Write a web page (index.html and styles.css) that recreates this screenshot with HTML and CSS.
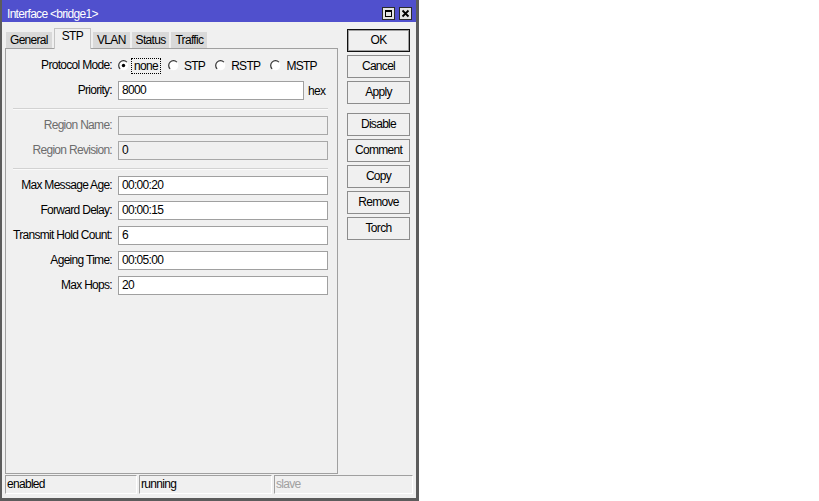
FILE: index.html
```html
<!DOCTYPE html>
<html>
<head>
<meta charset="utf-8">
<title>Interface &lt;bridge1&gt;</title>
<link rel="stylesheet" href="styles.css">
</head>
<body>
<div class="window">
  <div class="titlebar">
    <span class="title">Interface &lt;bridge1&gt;</span>
    <div class="title-btns">
      <span class="tbtn"><svg width="11" height="11" viewBox="0 0 11 11"><rect x="2.5" y="2.5" width="6" height="6" fill="none" stroke="#000" stroke-width="1"/><rect x="2" y="2" width="7" height="2" fill="#000"/></svg></span>
      <span class="tbtn"><svg width="11" height="11" viewBox="0 0 11 11"><path d="M2.5 2.5 L8.5 8.5 M8.5 2.5 L2.5 8.5" stroke="#000" stroke-width="1.8" fill="none"/></svg></span>
    </div>
  </div>
  <div class="body">
    <div class="left">
      <div class="tabs">
        <span class="tab">General</span>
        <span class="tab active">STP</span>
        <span class="tab">VLAN</span>
        <span class="tab">Status</span>
        <span class="tab">Traffic</span>
      </div>
      <div class="panel">
        <div class="form">
          <span class="lbl">Protocol Mode:</span>
          <div class="radios">
            <span class="opt"><svg class="radio" width="11" height="11" viewBox="0 0 11 11"><circle cx="5.5" cy="5.5" r="4.8" fill="#fff"/><path d="M8.9 2.1 A4.8 4.8 0 0 0 2.1 8.9" fill="none" stroke="#333" stroke-width="1.2"/><circle cx="5.5" cy="5.5" r="1.7" fill="#000"/></svg><span class="opt-label focus">none</span></span>
            <span class="opt"><svg class="radio" width="11" height="11" viewBox="0 0 11 11"><circle cx="5.5" cy="5.5" r="4.8" fill="#fff"/><path d="M8.9 2.1 A4.8 4.8 0 0 0 2.1 8.9" fill="none" stroke="#333" stroke-width="1.2"/></svg><span class="opt-label">STP</span></span>
            <span class="opt"><svg class="radio" width="11" height="11" viewBox="0 0 11 11"><circle cx="5.5" cy="5.5" r="4.8" fill="#fff"/><path d="M8.9 2.1 A4.8 4.8 0 0 0 2.1 8.9" fill="none" stroke="#333" stroke-width="1.2"/></svg><span class="opt-label">RSTP</span></span>
            <span class="opt"><svg class="radio" width="11" height="11" viewBox="0 0 11 11"><circle cx="5.5" cy="5.5" r="4.8" fill="#fff"/><path d="M8.9 2.1 A4.8 4.8 0 0 0 2.1 8.9" fill="none" stroke="#333" stroke-width="1.2"/></svg><span class="opt-label">MSTP</span></span>
          </div>

          <span class="lbl">Priority:</span>
          <div class="with-unit"><span class="field short">8000</span><span class="unit">hex</span></div>

          <div class="sep"></div>

          <span class="lbl disabled">Region Name:</span>
          <span class="field off"></span>

          <span class="lbl disabled">Region Revision:</span>
          <span class="field off">0</span>

          <div class="sep"></div>

          <span class="lbl">Max Message Age:</span>
          <span class="field">00:00:20</span>

          <span class="lbl">Forward Delay:</span>
          <span class="field">00:00:15</span>

          <span class="lbl">Transmit Hold Count:</span>
          <span class="field">6</span>

          <span class="lbl">Ageing Time:</span>
          <span class="field">00:05:00</span>

          <span class="lbl">Max Hops:</span>
          <span class="field">20</span>
        </div>
      </div>
    </div>
    <div class="buttons">
      <span class="btn default">OK</span>
      <span class="btn">Cancel</span>
      <span class="btn">Apply</span>
      <span class="btn group-start">Disable</span>
      <span class="btn">Comment</span>
      <span class="btn">Copy</span>
      <span class="btn">Remove</span>
      <span class="btn">Torch</span>
    </div>
  </div>
  <div class="statusbar">
    <span class="seg">enabled</span>
    <span class="seg">running</span>
    <span class="seg dim">slave</span>
  </div>
</div>
</body>
</html>
```

FILE: styles.css
```css
* { box-sizing: border-box; }
html, body { margin: 0; padding: 0; background: #fff; }
body {
  font-family: "Liberation Sans", Arial, sans-serif;
  font-size: 12px;
  color: #000;
  letter-spacing: -0.7px;
}
.window {
  width: 419px;
  height: 501px;
  display: flex;
  flex-direction: column;
  background: #f0f0f0;
  border-left: 2px solid #5c5c5c;
  border-right: 3px solid #5c5c5c;
  border-bottom: 3px solid #5c5c5c;
}
.titlebar {
  height: 22px;
  flex: none;
  display: flex;
  align-items: flex-start;
  background: #5050cd;
  color: #fff;
}
.title {
  flex: 1;
  padding: 7px 0 0 5px;
  line-height: 15px;
  white-space: nowrap;
}
.title-btns {
  display: flex;
  gap: 4px;
  margin: 7px 4px 0 0;
}
.tbtn {
  width: 13px;
  height: 13px;
  background: #e4e4e4;
  border: 1px solid #2b2b2b;
  display: flex;
}
.body {
  flex: 1;
  display: flex;
  padding: 0 6px 0 3px;
  min-height: 0;
}
.left {
  width: 333px;
  display: flex;
  flex-direction: column;
}
.tabs {
  flex: none;
  display: flex;
  align-items: flex-end;
  height: 20px;
  margin-top: 6px;
  padding-left: 1px;
  position: relative;
  z-index: 1;
}
.tab {
  height: 16px;
  line-height: 16px;
  padding: 0 4px;
  margin-right: 2px;
  background: #d9d9d9;
  white-space: nowrap;
}
.tab.active {
  height: 21px;
  line-height: 15px;
  margin-bottom: -1px;
  padding: 0 7px;
  background: #f0f0f0;
  border: 1px solid #c4c4c4;
  border-bottom: none;
}
.panel {
  flex: 1;
  border: 1px solid #a0a0a0;
  padding: 7px 0 0 7px;
}
.form {
  display: grid;
  grid-template-columns: 99px 210px;
  column-gap: 6px;
  row-gap: 6px;
}
.lbl {
  height: 19px;
  line-height: 19px;
  text-align: right;
  white-space: nowrap;
}
.lbl.disabled { color: #6d6d6d; }
.field {
  height: 19px;
  border: 1px solid #a0a0a0;
  background: #fff;
  padding-left: 3px;
  line-height: 17px;
  white-space: nowrap;
}
.field.off {
  background: #f0f0f0;
  border-color: #a8a8a8;
}
.with-unit {
  display: flex;
  align-items: center;
  gap: 4px;
}
.field.short { width: 186px; }
.sep {
  grid-column: 1 / -1;
  margin-top: 2px;
  border-top: 1px solid #d2d2d2;
  border-bottom: 1px solid #fafafa;
}
.radios {
  display: flex;
  align-items: center;
  height: 19px;
}
.opt {
  display: flex;
  align-items: center;
  margin-right: 7px;
}
.radio { margin-right: 2px; flex: none; }
.opt-label {
  padding: 0 2px;
  line-height: 14px;
  border: 1px dotted transparent;
}
.opt-label.focus { border-color: #000; }
.buttons {
  width: 63px;
  margin-left: 9px;
  padding-top: 7px;
  display: flex;
  flex-direction: column;
  gap: 3px;
}
.btn {
  height: 23px;
  line-height: 21px;
  text-align: center;
  border: 1px solid #8c8c8c;
  background: #f0f0f0;
}
.btn.default {
  border-color: #111;
  box-shadow: inset 0 0 0 1px #a0a0a0;
}
.btn.group-start { margin-top: 6px; }
.statusbar {
  flex: none;
  display: grid;
  grid-template-columns: 132px 133px 1fr;
  gap: 2px;
  height: 19px;
  margin: 1px 0 4px;
  padding: 0 3px;
}
.seg {
  border-top: 1px solid #a0a0a0;
  border-left: 1px solid #a0a0a0;
  border-right: 1px solid #fff;
  border-bottom: 1px solid #fff;
  padding-left: 1px;
  line-height: 17px;
  white-space: nowrap;
}
.seg.dim { color: #a0a0a0; }
```
